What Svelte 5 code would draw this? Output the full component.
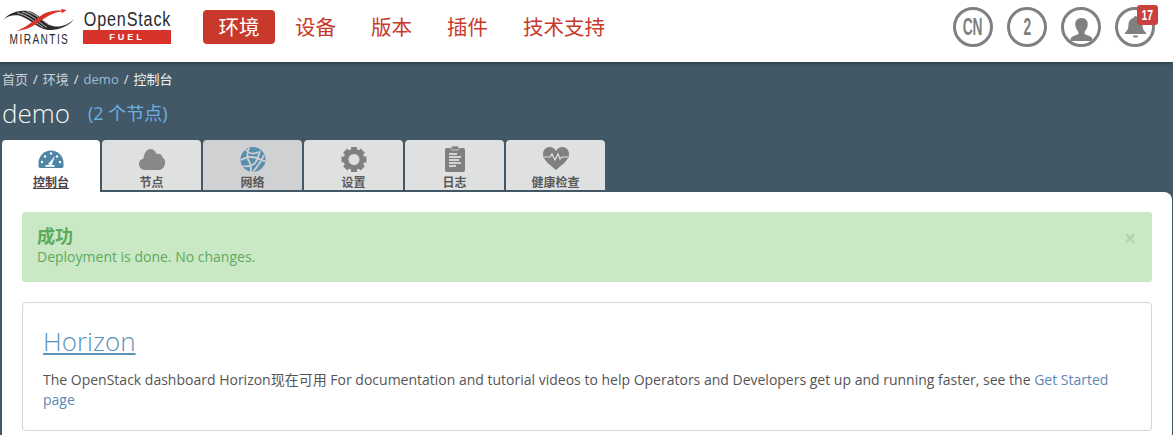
<script>
  const nav = [
    { label: '环境', active: true },
    { label: '设备' },
    { label: '版本' },
    { label: '插件' },
    { label: '技术支持' }
  ];
  const tabs = [
    { label: '控制台', icon: 'gauge', active: true },
    { label: '节点', icon: 'cloud' },
    { label: '网络', icon: 'globe', dim: true },
    { label: '设置', icon: 'gear' },
    { label: '日志', icon: 'log' },
    { label: '健康检查', icon: 'heart' }
  ];
  const teeth = [0, 45, 90, 135, 180, 225, 270, 315];
</script>

<div class="page">
  <header class="topbar">
    <div class="logos">
      <div class="mirantis">
        <svg class="swoosh" width="80" height="26" viewBox="0 0 240 78">
          <path d="M12 42C30 22 60 15 85 18c25 4 40 27 65 42 25 12 55 0 72-18-17 24-52 36-82 32-30-6-50-32-80-42-20-4-35 1-48 10z" fill="#2a2a2c"/>
          <path d="M66 21c25 5 48 28 74 46M80 19c28 8 46 28 70 42M52 24c26 4 52 26 78 44" fill="none" stroke="#fff" stroke-width="2"/>
          <path d="M48 78c42-3 62-23 82-36 20-14 40-22 55-22l1 5 14-10-17-3 2 5c-25-1-45 3-65 17-25 18-45 36-72 44z" fill="#d8332a"/>
        </svg>
        <span class="mirantis-name">MIRANTIS</span>
      </div>
      <div class="openstack">
        <span class="openstack-name">OpenStack</span>
        <span class="fuel">FUEL</span>
      </div>
    </div>
    <nav class="mainnav">
      {#each nav as item}
        <span class="navitem" class:active={item.active}>{item.label}</span>
      {/each}
    </nav>
    <div class="tools">
      <span class="ring"><span class="ringtext">CN</span></span>
      <span class="ring"><span class="ringtext">2</span></span>
      <span class="ring user">
        <svg width="23" height="27" viewBox="0 0 26 30">
          <path d="M13 2c5 0 7.500 3.500 7 8-.3 3-1.500 5.500-3.500 7.500v2.500c3 1.500 7 2.500 8.500 4.500.5 1 .5 3 .5 3.500H.5c0-.5 0-2.500.5-3.500C2.500 22.500 6.500 21.500 9.500 20v-2.500C7.500 15.500 6.300 13 6 10c-.5-4.500 2-8 7-8z" fill="#808080"/>
        </svg>
      </span>
      <span class="ring bell">
        <svg width="23" height="24" viewBox="0 0 26 27">
          <path d="M13 1c1.200 0 2 .8 2 2 4 1 6 4 6 8 0 5 1.500 7 4 9v1.500H1V20c2.500-2 4-4 4-9 0-4 2-7 6-8 0-1.200.8-2 2-2z" fill="#808080"/>
          <path d="M10 23h6c0 1.500-1.300 2.500-3 2.500S10 24.500 10 23z" fill="#808080"/>
        </svg>
        <b class="badge"><span class="badgetext">17</span></b>
      </span>
    </div>
  </header>

  <div class="crumbs">
    <span class="crumb">首页</span><i>/</i><span class="crumb">环境</span><i>/</i><span class="crumb link">demo</span><i>/</i><span class="crumb current">控制台</span>
  </div>

  <div class="titlerow">
    <h1>demo</h1>
    <span class="count">(2 个节点)</span>
  </div>

  <div class="tabs">
    {#each tabs as tab}
      <div class="tab" class:active={tab.active} class:dim={tab.dim}>
        <svg class="tabicon" width="30" height="28" viewBox="0 0 30 28">
          {#if tab.icon === 'gauge'}
            <path d="M2.500 19a12.500 12.500 0 0 1 25 0v3c0 1.500-.8 2-2 2h-21c-1.200 0-2-.5-2-2z" fill="#4f85a6"/>
            <g fill="#fff">
              <circle cx="6" cy="18" r="1.200"/><circle cx="9" cy="12.500" r="1.200"/><circle cx="15" cy="9.500" r="1.200"/><circle cx="21" cy="12.500" r="1.200"/><circle cx="24" cy="18" r="1.200"/>
            </g>
            <path d="M12 20l7-8-3.500 9.500z" fill="#fff"/>
            <rect x="9.500" y="21" width="9" height="1.800" fill="#fff"/>
          {:else if tab.icon === 'cloud'}
            <path d="M8 26C4 26 2 23 2 20c0-3 2-5 4.500-5.500C7 9 10 5 13.500 5c3 0 5 2 6 5 3-1 5.500 .5 6 3.500 2 .7 3 3.500 2.500 6-.5 3-2.500 6.500-6 6.500z" fill="#888"/>
          {:else if tab.icon === 'globe'}
            <circle cx="15" cy="15.500" r="12.500" fill="#5a8eae"/>
            <path d="M7 5c3 4 8 6 13 3M3 16c5-3 12-4 18-1 2 1 4 2 6 2M11 4c-2 5-3 10 1 15 1 3 1 6 1 9M22 7c-2 5-2 10-6 13-3 2-7 3-11 2M26 11c-3 7-7 12-11 17" fill="none" stroke="#d0d1d3" stroke-width="1.800"/>
          {:else if tab.icon === 'gear'}
            <g fill="#808080">
              {#each teeth as a}
                <rect x="12" y="3" width="6" height="6" transform="rotate({a} 15 15.500)"/>
              {/each}
            </g>
            <circle cx="15" cy="15.500" r="8" fill="none" stroke="#808080" stroke-width="5"/>
          {:else if tab.icon === 'log'}
            <rect x="5" y="4" width="20" height="24" rx="2" fill="#808080"/>
            <rect x="11" y="2" width="8" height="4" rx="1.500" fill="#808080" stroke="#dfe0e0" stroke-width=".8"/>
            <path d="M9 10h8M9 13h12M9 16h10M9 19h12M9 22h7" stroke="#eee" stroke-width="1.600"/>
          {:else}
            <path d="M15 26C8 20 2 16 2 10c0-4 3-7 6.500-7 3 0 5 1.500 6.500 4 1.500-2.500 3.500-4 6.500-4C25 3 28 6 28 10c0 6-6 10-13 16z" fill="#808080"/>
            <path d="M3 13h6l2-3 3 6 3-6 2 5 2-2h6" fill="none" stroke="#dfe0e0" stroke-width="1.200"/>
          {/if}
        </svg>
        <span class="tablabel">{tab.label}</span>
      </div>
    {/each}
  </div>

  <main class="panel">
    <div class="alert">
      <div class="alert-text">
        <strong>成功</strong>
        <span>Deployment is done. No changes.</span>
      </div>
      <span class="close">×</span>
    </div>
    <section class="card">
      <a class="card-title" href="#horizon">Horizon</a>
      <p>The OpenStack dashboard Horizon现在可用 For documentation and tutorial videos to help Operators and Developers get up and running faster, see the <a href="#start">Get Started page</a></p>
    </section>
  </main>
</div>

<style>
  :global(body) {
    margin: 0;
    background: #425866;
  }
  .page {
    height: 435px;
    overflow: hidden;
    font-family: "Open Sans", "Noto Sans CJK SC", sans-serif;
    font-size: 14px;
    color: #555;
  }
  .topbar {
    height: 62px;
    background: #fff;
    display: flex;
    align-items: flex-start;
    box-shadow: 0 1px 3px rgba(30, 45, 55, 0.8);
    position: relative;
  }
  .logos {
    display: flex;
    width: 203px;
    flex: none;
    padding-top: 5px;
    box-sizing: border-box;
    gap: 3px;
  }
  .mirantis {
    width: 80px;
    display: flex;
    flex-direction: column;
    align-items: center;
  }
  .swoosh {
    display: block;
  }
  .mirantis-name {
    font-family: "Liberation Sans", sans-serif;
    font-size: 14px;
    line-height: 14px;
    letter-spacing: 2px;
    color: #2a2a2c;
    white-space: nowrap;
    margin: 1px 0 0 -2px;
    transform: scaleX(0.72);
  }
  .openstack {
    width: 88px;
    margin-top: 4px;
    display: flex;
    flex-direction: column;
  }
  .openstack-name {
    font-family: "Liberation Sans", sans-serif;
    font-size: 20px;
    line-height: 21px;
    letter-spacing: 1px;
    color: #2a2a2c;
    white-space: nowrap;
    padding-left: 1px;
    transform: scaleX(0.81);
    transform-origin: left center;
  }
  .fuel {
    height: 14px;
    background: #d8332a;
    color: #fff;
    font: bold 9px/14px "Liberation Sans", sans-serif;
    letter-spacing: 3px;
    text-align: center;
  }
  .mainnav {
    display: flex;
    gap: 5px;
    padding-top: 10px;
  }
  .navitem {
    padding: 0 15px;
    height: 34px;
    line-height: 34px;
    font-size: 20.500px;
    color: #c8392b;
    border-radius: 4px;
    white-space: nowrap;
  }
  .navitem.active {
    padding: 0 15.500px;
    background: #c8392b;
    color: #fff;
  }
  .tools {
    margin-left: auto;
    display: flex;
    gap: 14px;
    padding: 7px 18px 0 0;
  }
  .ring {
    position: relative;
    width: 40px;
    height: 40px;
    box-sizing: border-box;
    border: 3.5px solid #808080;
    border-radius: 50%;
    display: flex;
    align-items: center;
    justify-content: center;
    overflow: hidden;
    color: #808080;
  }
  .ringtext {
    font-family: "Liberation Sans", sans-serif;
    font-size: 23px;
    font-weight: bold;
    transform: scaleX(0.6);
  }
  .ring.bell {
    overflow: visible;
  }
  .ring svg {
    display: block;
  }
  .ring.user svg {
    margin-top: 4px;
  }
  .badge {
    position: absolute;
    top: -5.500px;
    right: -5.500px;
    width: 21px;
    height: 20px;
    border-radius: 3px;
    background: #c9403f;
    color: #fff;
    font-family: "Liberation Sans", sans-serif;
    font-size: 15px;
    line-height: 20px;
    text-align: center;
  }
  .badgetext {
    display: inline-block;
    transform: scaleX(0.7);
  }
  .crumbs {
    height: 33px;
    padding: 7px 0 0 2px;
    box-sizing: border-box;
    font-size: 13px;
    line-height: 20px;
    color: #c8d0d6;
    white-space: nowrap;
  }
  .crumbs i {
    font-style: normal;
    padding: 0 5px;
    color: #e8e8e8;
  }
  .crumb.link {
    color: #9dbbd6;
  }
  .crumb.current {
    color: #f2f2f2;
  }
  .titlerow {
    height: 45px;
    padding-left: 2px;
    display: flex;
    align-items: flex-start;
    gap: 18px;
  }
  h1 {
    margin: 0;
    font-size: 26px;
    line-height: 36px;
    font-weight: 300;
    color: #f4f4f4;
  }
  .count {
    font-size: 18px;
    line-height: 36px;
    color: #6cb0e2;
  }
  .tabs {
    display: flex;
    gap: 2px;
    margin-left: 2px;
    height: 52px;
    align-items: flex-start;
  }
  .tab {
    width: 99px;
    height: 50px;
    box-sizing: border-box;
    background: #dfe0e0;
    border-radius: 4px 4px 0 0;
    display: flex;
    flex-direction: column;
    align-items: center;
    padding-top: 4px;
  }
  .tab.active {
    width: 98px;
    height: 52px;
    background: #fff;
  }
  .tab.dim {
    background: #d0d1d3;
  }
  .tabicon {
    flex: none;
    display: block;
  }
  .tablabel {
    font-size: 12px;
    font-weight: bold;
    line-height: 18px;
    padding-top: 2px;
    color: #5a5a5a;
  }
  .tab.active .tablabel {
    text-decoration: underline;
    color: #50424a;
  }
  .panel {
    margin-left: 2px;
    margin-right: 1px;
    height: 243px;
    box-sizing: border-box;
    background: #fff;
    border-radius: 0 8px 0 0;
    padding: 20px 20px 0;
    display: flex;
    flex-direction: column;
    gap: 20px;
  }
  .alert {
    height: 70px;
    flex: none;
    box-sizing: border-box;
    background: #cae7c6;
    border-radius: 3px;
    padding: 13px 15px 0;
    display: flex;
    justify-content: space-between;
    color: #5cab5c;
  }
  .alert-text {
    display: flex;
    flex-direction: column;
    line-height: 20px;
  }
  .alert-text strong {
    font-size: 18px;
    line-height: 22px;
  }
  .close {
    font-size: 21px;
    font-weight: bold;
    line-height: 26px;
    color: #b2d5b0;
    margin-right: 1px;
  }
  .card {
    flex: none;
    height: 129px;
    box-sizing: border-box;
    border: 1px solid #d4d4d4;
    border-radius: 4px;
    padding: 19px 20px 0;
  }
  .card-title {
    display: inline-block;
    font-size: 26px;
    font-weight: 300;
    line-height: 38px;
    color: #5b93b9;
    text-decoration: underline;
  }
  .card p {
    margin: 10px 0 0;
    line-height: 20px;
    font-size: 14px;
  }
  .card p a {
    color: #5b88b4;
    text-decoration: none;
  }
</style>
